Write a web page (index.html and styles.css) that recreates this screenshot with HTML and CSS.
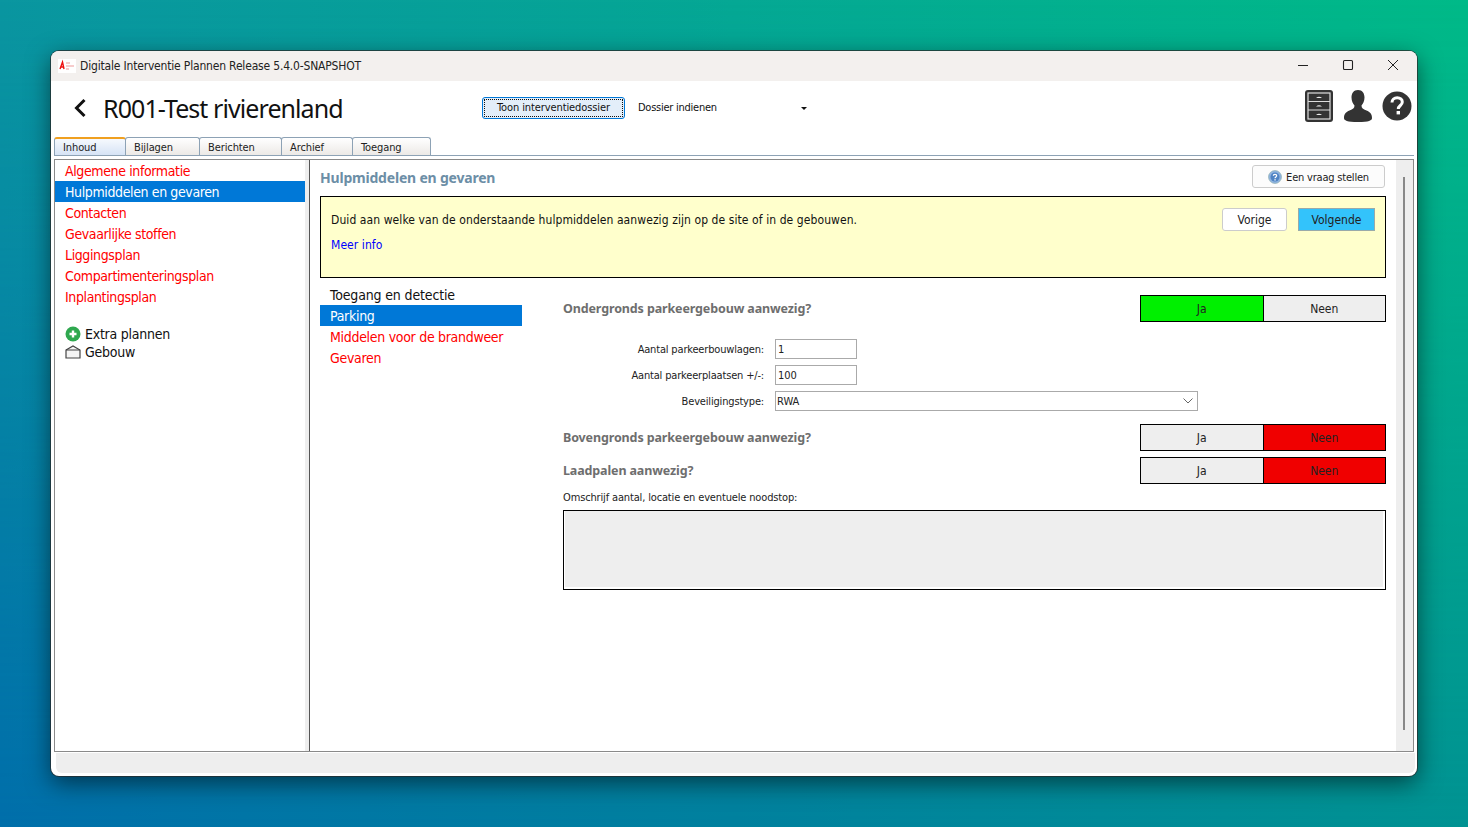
FILE: index.html
```html
<!DOCTYPE html>
<html lang="nl">
<head>
    <meta charset="UTF-8">
    <title>Digitale Interventie Plannen</title>
    <link rel="stylesheet" href="styles.css">
</head>
<body>
    <div class="window">
        <div class="titlebar">
            <svg class="app-logo" width="18" height="14" viewBox="0 0 18 14">
                <rect width="18" height="14" fill="#fff"/>
                <path d="M2 10 L4.5 3 L6 10 M3 8 H6" fill="none" stroke="#e11" stroke-width="1.4"/>
                <path d="M8 4 H12 M8 7 H16 M8 10 H11" stroke="#e99" stroke-width="1"/>
            </svg>
            <span class="titlebar-text">Digitale Interventie Plannen Release 5.4.0-SNAPSHOT</span>
            <div class="win-controls">
                <svg width="12" height="12" viewBox="0 0 12 12"><path d="M1 6.5 H11" stroke="#222" stroke-width="1"/></svg>
                <svg width="12" height="12" viewBox="0 0 12 12"><rect x="1.5" y="1.5" width="9" height="9" rx="1" fill="none" stroke="#222" stroke-width="1.1"/></svg>
                <svg width="12" height="12" viewBox="0 0 12 12"><path d="M1 1 L11 11 M11 1 L1 11" stroke="#222" stroke-width="1"/></svg>
            </div>
        </div>

        <div class="header">
            <svg class="back" width="14" height="20" viewBox="0 0 14 20"><path d="M11.5 2 L3.5 10 L11.5 18" fill="none" stroke="#111" stroke-width="3"/></svg>
            <h1 class="page-title">R001-Test rivierenland</h1>
            <button class="focus-btn"><span>Toon interventiedossier</span></button>
            <div class="dossier-select">
                <span>Dossier indienen</span>
                <i class="caret"></i>
            </div>
            <div class="header-icons">
                <svg width="28" height="32" viewBox="0 0 28 32">
                    <rect width="28" height="32" rx="3" fill="#333"/>
                    <rect x="3" y="3" width="22" height="26" fill="none" stroke="#ddd" stroke-width="1.2"/>
                    <path d="M3 11.5 H25 M3 20 H25" stroke="#ddd" stroke-width="1.2"/>
                    <path d="M11 8 Q14 5.5 17 8 Z M11 16.5 Q14 14 17 16.5 Z M11 25 Q14 22.5 17 25 Z" fill="#eee"/>
                </svg>
                <svg width="28" height="32" viewBox="0 0 28 32">
                    <path d="M14 0 C9.500 0 7.500 3.500 7.500 7.500 C7.500 11 9 14 10.500 15.500 C10.500 18 9 19 5.500 20.500 C2 22 0 24 0 28 C0 30.500 3 32 14 32 C25 32 28 30.500 28 28 C28 24 26 22 22.500 20.500 C19 19 17.500 18 17.500 15.500 C19 14 20.500 11 20.500 7.500 C20.500 3.500 18.500 0 14 0 Z" fill="#333"/>
                </svg>
                <svg class="help-icon" width="30" height="30" viewBox="0 0 30 30">
                    <circle cx="15" cy="15" r="14.500" fill="#333"/>
                    <path d="M10 11.500 C10 8.500 12.200 6.800 15.200 6.800 C18.200 6.800 20.300 8.500 20.300 11 C20.300 14.500 16.300 14.500 16.300 18" fill="none" stroke="#fff" stroke-width="3"/>
                    <rect x="14.600" y="20" width="3.400" height="3.400" fill="#fff"/>
                </svg>
            </div>
        </div>

        <div class="tabs">
            <div class="tab active">Inhoud</div>
            <div class="tab">Bijlagen</div>
            <div class="tab tab-c">Berichten</div>
            <div class="tab tab-d">Archief</div>
            <div class="tab tab-e">Toegang</div>
        </div>

        <div class="panes">
            <div class="sidebar">
                <ul class="nav">
                    <li class="nav-red">Algemene informatie</li>
                    <li class="nav-selected">Hulpmiddelen en gevaren</li>
                    <li class="nav-red">Contacten</li>
                    <li class="nav-red">Gevaarlijke stoffen</li>
                    <li class="nav-red">Liggingsplan</li>
                    <li class="nav-red">Compartimenteringsplan</li>
                    <li class="nav-red">Inplantingsplan</li>
                </ul>
                <div class="extra">
                    <div class="extra-row">
                        <svg width="16" height="16" viewBox="0 0 16 16">
                            <circle cx="8" cy="8" r="7.500" fill="#2fa84f"/>
                            <path d="M8 4.500 V11.500 M4.500 8 H11.500" stroke="#fff" stroke-width="2.400"/>
                        </svg>
                        <span>Extra plannen</span>
                    </div>
                    <div class="extra-row">
                        <svg width="16" height="14" viewBox="0 0 16 14">
                            <path d="M1 5 L8 1 L15 5 V13 H1 Z" fill="#f4f4f4" stroke="#444" stroke-width="1.200"/>
                            <path d="M1 5 H15" stroke="#444" stroke-width="1"/>
                        </svg>
                        <span>Gebouw</span>
                    </div>
                </div>
            </div>

            <div class="main">
                <div class="content">
                    <div class="content-head">
                        <h2 class="section-title">Hulpmiddelen en gevaren</h2>
                        <button class="ask-btn">
                            <svg width="14" height="14" viewBox="0 0 14 14">
                                <circle cx="7" cy="7" r="6.500" fill="#8fb4e0" stroke="#8aa" stroke-width="0.600"/>
                                <circle cx="7" cy="7" r="4.500" fill="#4f84c4"/>
                                <path d="M5.300 5.800 C5.300 4 8.700 4 8.700 5.800 C8.700 7 7 7 7 8.300" fill="none" stroke="#fff" stroke-width="1.200"/>
                                <rect x="6.400" y="9.200" width="1.300" height="1.300" fill="#fff"/>
                            </svg>
                            Een vraag stellen
                        </button>
                    </div>

                    <div class="notice">
                        <div class="notice-text">
                            <p>Duid aan welke van de onderstaande hulpmiddelen aanwezig zijn op de site of in de gebouwen.</p>
                            <a href="#">Meer info</a>
                        </div>
                        <button class="btn-prev">Vorige</button>
                        <button class="btn-next">Volgende</button>
                    </div>

                    <div class="details">
                        <ul class="subnav">
                            <li>Toegang en detectie</li>
                            <li class="nav-selected">Parking</li>
                            <li class="nav-red">Middelen voor de brandweer</li>
                            <li class="nav-red">Gevaren</li>
                        </ul>

                        <div class="form">
                            <div class="question">
                                <span class="question-label">Ondergronds parkeergebouw aanwezig?</span>
                                <div class="toggle">
                                    <div class="toggle-opt yes-on">Ja</div>
                                    <div class="toggle-opt">Neen</div>
                                </div>
                            </div>

                            <div class="fields">
                                <label class="field-label">Aantal parkeerbouwlagen:</label>
                                <input class="field-input" type="text" value="1">
                                <label class="field-label">Aantal parkeerplaatsen +/-:</label>
                                <input class="field-input" type="text" value="100">
                                <label class="field-label">Beveiligingstype:</label>
                                <div class="field-select">
                                    <span>RWA</span>
                                    <svg width="10" height="6" viewBox="0 0 10 6"><path d="M0.500 0.500 L5 5 L9.500 0.500" fill="none" stroke="#666" stroke-width="1"/></svg>
                                </div>
                            </div>

                            <div class="question q-second">
                                <span class="question-label">Bovengronds parkeergebouw aanwezig?</span>
                                <div class="toggle">
                                    <div class="toggle-opt">Ja</div>
                                    <div class="toggle-opt no-on">Neen</div>
                                </div>
                            </div>
                            <div class="question q-third">
                                <span class="question-label">Laadpalen aanwezig?</span>
                                <div class="toggle">
                                    <div class="toggle-opt">Ja</div>
                                    <div class="toggle-opt no-on">Neen</div>
                                </div>
                            </div>

                            <div class="describe-label">Omschrijf aantal, locatie en eventuele noodstop:</div>
                            <div class="describe-box"><div class="describe-fill"></div></div>
                        </div>
                    </div>
                </div>
                <div class="scrollbar"><div class="scroll-thumb"></div></div>
            </div>
        </div>

        <div class="statusbar"></div>
    </div>
</body>
</html>
```

FILE: styles.css
```css
* {
    box-sizing: border-box;
}

html, body {
    height: 100%;
}

body {
    margin: 0;
    padding: 51px;
    overflow: hidden;
    font-family: 'DejaVu Sans Condensed', 'DejaVu Sans', sans-serif;
    color: #111;
    background: linear-gradient(to right, #0a96a0, #00ba88);
    position: relative;
}

body::before {
    content: "";
    position: absolute;
    inset: 0;
    background: linear-gradient(to right, #006eaa, #009292);
    -webkit-mask-image: linear-gradient(to top, #000 0%, transparent 100%);
    mask-image: linear-gradient(to top, #000 0%, transparent 100%);
}

.window {
    position: relative;
    width: 1366px;
    height: 725px;
    background: #fff;
    border-radius: 8px;
    box-shadow: 0 0 0 1px rgba(40, 40, 40, 0.7), 0 7px 24px rgba(0, 0, 0, 0.55);
    overflow: hidden;
    display: flex;
    flex-direction: column;
}

/* title bar */
.titlebar {
    height: 30px;
    flex: none;
    background: #f3f0ee;
    display: flex;
    align-items: center;
    padding-left: 7px;
}

.app-logo {
    flex: none;
}

.titlebar-text {
    margin-left: 4px;
    font-size: 12px;
    letter-spacing: -0.18px;
    color: #222;
}

.win-controls {
    margin-left: auto;
    display: flex;
    gap: 33px;
    padding: 0 18px 2px 0;
}

/* header */
.header {
    height: 56px;
    flex: none;
    display: flex;
    align-items: flex-start;
}

.back {
    margin: 17px 0 0 22px;
    flex: none;
}

.page-title {
    margin: 7px 0 0 16px;
    width: 379px;
    font-family: 'Noto Sans', sans-serif;
    font-size: 25px;
    line-height: 40px;
    font-weight: 400;
    letter-spacing: -0.92px;
    color: #111;
}

.focus-btn {
    width: 143px;
    height: 22px;
    margin-top: 16px;
    padding: 1px;
    background: #e3eef9;
    border: 1px solid #0078d7;
    border-radius: 3px;
    font-family: inherit;
    font-size: 11px;
    letter-spacing: -0.1px;
    color: #111;
}

.focus-btn span {
    display: block;
    height: 18px;
    line-height: 15px;
    border: 1px dotted #111;
}

.dossier-select {
    width: 169px;
    margin: 19px 0 0 13px;
    display: flex;
    justify-content: space-between;
    align-items: center;
    font-size: 11px;
    letter-spacing: -0.25px;
    line-height: 16px;
}

.caret {
    width: 0;
    height: 0;
    border-left: 3px solid transparent;
    border-right: 3px solid transparent;
    border-top: 3px solid #111;
}

.header-icons {
    margin: 9px 0 0 auto;
    display: flex;
    align-items: center;
    gap: 11px;
    padding-right: 5px;
}

.help-icon {
    margin-left: -1px;
}

/* tabs */
.tabs {
    height: 19px;
    flex: none;
    display: flex;
    align-items: flex-end;
    border-bottom: 1px solid #8da2b5;
    margin: 0 3px;
    padding-left: 1px;
}

.tab {
    height: 18px;
    width: 75px;
    margin-left: -1px;
    padding: 1px 0 0 8px;
    font-size: 11px;
    letter-spacing: -0.1px;
    line-height: 18px;
    color: #222;
    background: linear-gradient(#fff, #ece9e6);
    border: 1px solid #8da2b5;
    border-bottom: none;
    border-radius: 3px 3px 0 0;
}

.tab.active {
    width: 72px;
    background: linear-gradient(#f6f9fd, #d6e3f5);
    border-top: 2px solid #f0a020;
    line-height: 16px;
}

.tab-c { width: 83px; }
.tab-d { width: 72px; }
.tab-e { width: 79px; }

/* panes */
.panes {
    flex: 1;
    min-height: 0;
    display: flex;
    margin: 3px 3px 0 3px;
    border: 1px solid #8a8a8a;
}

.sidebar {
    width: 254px;
    flex: none;
    border-right: 4px solid #eee;
}

.nav, .subnav {
    list-style: none;
    margin: 0;
    padding: 0;
}

.nav li, .subnav li {
    height: 21px;
    line-height: 22px;
    font-size: 14px;
    letter-spacing: -0.38px;
    padding-left: 10px;
}

.subnav li {
    letter-spacing: -0.3px;
}

.subnav li:first-child {
    letter-spacing: -0.15px;
}

.nav-red {
    color: #f00;
}

.nav-selected {
    background: #0078d7;
    color: #fff;
}

.extra {
    margin-top: 18px;
    padding-left: 10px;
}

.extra-row {
    height: 18px;
    display: flex;
    align-items: center;
    gap: 4px;
    font-size: 14px;
    letter-spacing: -0.25px;
    color: #111;
}

.main {
    flex: 1;
    min-width: 0;
    display: flex;
    border-left: 1px solid #555;
}

.content {
    flex: 1;
    min-width: 0;
    padding: 0 10px;
}

.content-head {
    height: 36px;
    display: flex;
    justify-content: space-between;
    align-items: flex-start;
}

.section-title {
    margin: 9px 0 0;
    font-family: 'Noto Sans', sans-serif;
    font-size: 14px;
    line-height: 18px;
    font-weight: 700;
    letter-spacing: -0.2px;
    color: #6c8ea6;
}

.ask-btn {
    width: 133px;
    height: 23px;
    margin: 5px 1px 0 0;
    padding: 1px 0 0;
    display: flex;
    align-items: center;
    justify-content: center;
    gap: 4px;
    font-family: inherit;
    font-size: 11px;
    letter-spacing: -0.2px;
    color: #222;
    background: #fcfcfc;
    border: 1px solid #ccc;
    border-radius: 3px;
}

.notice {
    height: 82px;
    display: flex;
    align-items: flex-start;
    padding: 11px 10px 0 10px;
    background: #ffffcc;
    border: 1px solid #000;
}

.notice-text {
    flex: 1;
    font-size: 12px;
    letter-spacing: 0.08px;
}

.notice-text p {
    margin: 4px 0 9px;
    line-height: 16px;
}

.notice-text a {
    color: #00f;
    text-decoration: none;
    line-height: 16px;
}

.btn-prev, .btn-next {
    height: 23px;
    font-family: inherit;
    font-size: 12px;
    color: #222;
    padding: 0;
}

.btn-prev {
    width: 65px;
    background: #fff;
    border: 1px solid #ccc;
    border-radius: 3px;
}

.btn-next {
    width: 77px;
    margin-left: 11px;
    background: #33c3fb;
    border: 1px solid #9aa;
}

.details {
    display: flex;
    margin-top: 6px;
}

.subnav {
    width: 202px;
    flex: none;
}

.form {
    flex: 1;
    margin-left: 41px;
    min-width: 0;
}

.question {
    height: 27px;
    margin-top: 11px;
    display: flex;
    align-items: center;
    justify-content: space-between;
}

.q-second {
    margin-top: 13px;
}

.q-third {
    margin-top: 6px;
}

.question-label {
    font-family: 'Noto Sans', sans-serif;
    font-size: 12.500px;
    font-weight: 700;
    letter-spacing: -0.13px;
    color: #6e6e6e;
}

.toggle {
    width: 246px;
    height: 27px;
    display: flex;
    border: 1px solid #000;
}

.toggle-opt {
    flex: 1;
    text-align: center;
    line-height: 26px;
    font-size: 12px;
    color: #222;
    background: #eee;
}

.toggle-opt + .toggle-opt {
    border-left: 1px solid #000;
}

.yes-on {
    background: #00f000;
}

.no-on {
    background: #f00000;
}

.fields {
    display: grid;
    grid-template-columns: 201px 82px 330px;
    column-gap: 11px;
    row-gap: 6px;
    margin-top: 17px;
}

.field-label {
    grid-column: 1;
    height: 20px;
    font-size: 11px;
    letter-spacing: -0.17px;
    line-height: 22px;
    text-align: right;
    color: #222;
}

.field-input {
    grid-column: 2;
    height: 20px;
    padding: 0 2px;
    font-family: inherit;
    font-size: 11px;
    color: #222;
    border: 1px solid #aaa;
    outline: none;
}

.field-select {
    grid-column: 2 / 4;
    height: 20px;
    display: flex;
    align-items: center;
    justify-content: space-between;
    padding: 0 4px 0 1px;
    font-size: 11px;
    color: #222;
    border: 1px solid #aaa;
}

.describe-label {
    margin-top: 6px;
    font-size: 11px;
    letter-spacing: -0.15px;
    line-height: 16px;
    color: #222;
}

.describe-box {
    height: 80px;
    margin-top: 4px;
    padding: 0 2px 2px 1px;
    border: 1px solid #000;
}

.describe-fill {
    height: 100%;
    background: #eee;
}

.scrollbar {
    width: 17px;
    flex: none;
    background: #eee;
    padding-left: 7px;
}

.scroll-thumb {
    width: 2px;
    height: 553px;
    margin-top: 17px;
    background: #888;
}

.statusbar {
    height: 20px;
    flex: none;
    margin: 1px 2px 3px 5px;
    background: #eee;
    border-radius: 0 0 6px 6px;
}
```
